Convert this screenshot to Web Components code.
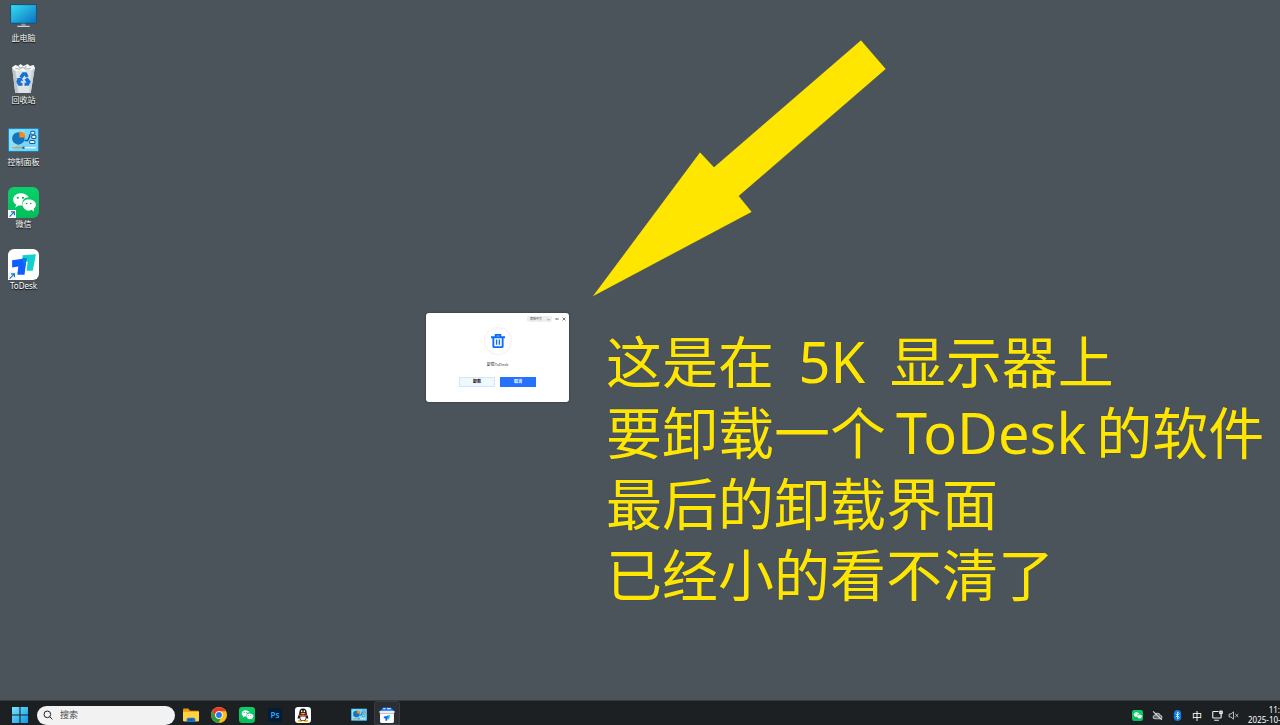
<!DOCTYPE html>
<html lang="zh-CN">
<head>
<meta charset="utf-8">
<title>桌面</title>
<style>
  html, body {
    margin: 0;
    height: 100%;
  }
  body {
    background: #4b545a;
    font-family: "Noto Sans", "Noto Sans CJK SC", sans-serif;
    overflow: hidden;
  }
  note-text span {
    margin: 0 10px;
  }
</style>
</head>
<body>
<desk-top>
  <desk-shortcut slot="icons" icon="pc">此电脑</desk-shortcut>
  <desk-shortcut slot="icons" icon="bin">回收站</desk-shortcut>
  <desk-shortcut slot="icons" icon="panel">控制面板</desk-shortcut>
  <desk-shortcut slot="icons" icon="wechat" linked>微信</desk-shortcut>
  <desk-shortcut slot="icons" icon="todesk" linked>ToDesk</desk-shortcut>
  <big-arrow></big-arrow>
  <uninstall-window>卸载ToDesk</uninstall-window>
  <note-text>
    <p>这是在 <span>5K</span> 显示器上</p>
    <p>要卸载一个<span>ToDesk</span>的软件</p>
    <p>最后的卸载界面</p>
    <p>已经小的看不清了</p>
  </note-text>
  <task-bar slot="bar"></task-bar>
</desk-top>

<script>
const ICONS = {
  pc: `<svg viewBox="0 0 30 30">
    <defs><linearGradient id="g" x1="0" y1="0" x2="1" y2="1"><stop offset="0" stop-color="#36dcee"/><stop offset="1" stop-color="#0b73c4"/></linearGradient></defs>
    <rect x="2" y="3" width="26" height="19" rx="1" fill="#17547c"/><rect x="3" y="4" width="24" height="17" fill="url(#g)"/>
    <path d="M13 22h4v2h-4z" fill="#8d979c"/><path d="M9 24h12v1H9z" fill="#e6eaec"/></svg>`,
  bin: `<svg viewBox="0 0 30 30">
    <path d="M4 4l3 25h15l4-25z" fill="#dfe3e5"/><path d="M4 4l3 2 3 23H7z" fill="#bfc6ca"/><path d="M26 4l-3 2-3 23h2z" fill="#cbd1d4"/>
    <path d="M4 4l3-2 3 1 2-2 3 2 4-2 2 2 4-1 1 3-3 2-4-1-3 2-4-1-4 1-3-2z" fill="#f7f8f8"/>
    <path d="M7 5l4 1 3-2 3 2 5-1M10 3l2 2M18 3l-2 2" fill="none" stroke="#aeb6ba"/>
    <g fill="#1672d2"><path d="M11 13l3-4h4l2 4-3 1-1-2-2 3z"/><path d="M19 14l3 4-2 4h-4v-3h2l-2-3z"/><path d="M8 15l5-1 2 4-2-1-1 2h2v3h-4l-2-4 1-2z"/></g></svg>`,
  panel: `<svg viewBox="0 0 30 30">
    <rect y="3" width="30" height="23" rx="1" fill="#168bc8"/><rect x="1" y="4" width="28" height="21" fill="#8ee0fa"/>
    <path d="M17 4h12v21H5z" fill="#6dcef4" opacity=".6"/>
    <circle cx="10" cy="13" r="6" fill="#1274bf"/><path d="M11 12V6a6 6 0 0 1 6 6z" fill="#f58a1b"/>
    <path d="M16 15h3l2-4V9" fill="none" stroke="#135b9d" stroke-width="1.500"/>
    <g fill="#e9faff" stroke="#135b9d"><rect x="22" y="6" width="4" height="3" rx="1"/><rect x="23" y="10" width="4" height="3" rx="1"/><rect x="21" y="15" width="5" height="3" rx="1"/></g>
    <path d="M4 22h11" stroke="#f08b1d"/><path d="M15 22h12" stroke="#fff"/><path d="M15 21v2" stroke="#135b9d" stroke-width="2"/></svg>`,
  wechat: `<svg viewBox="0 0 30 30">
    <defs><linearGradient id="g" x2="0" y2="1"><stop stop-color="#08d16b"/><stop offset="1" stop-color="#05bd59"/></linearGradient></defs>
    <rect width="30" height="30" rx="6" fill="url(#g)"/>
    <path d="M12 6c-4 0-7 3-7 6 0 2 1 4 3 5l-1 3 3-2 4 0c-1-5 2-8 6-8-1-2-4-4-8-4z" fill="#fff"/>
    <path d="M20 12c-4 0-6 2-6 5s3 6 6 6l3-1 2 2v-3c1-1 2-2 2-4 0-3-3-5-7-5z" fill="#fff"/>
    <g fill="#08a94f"><circle cx="9.500" cy="10.500" r="1"/><circle cx="14.500" cy="10.500" r="1"/><circle cx="18" cy="16" r=".8"/><circle cx="22" cy="16" r=".8"/></g></svg>`,
  todesk: `<svg viewBox="0 0 30 30">
    <rect width="30" height="30" rx="6" fill="#fff"/>
    <path d="M14 6l13-1-3 16h-6l1-9h-5z" fill="#12cfd0"/><path d="M4 11l14-2-2 16H9l1-8-6 1z" fill="#0f5dff"/><path d="M14 9l4 0-1 8-3-5z" fill="#0879e6"/></svg>`,
  start: `<svg viewBox="0 0 30 30">
    <defs><linearGradient id="g" gradientUnits="userSpaceOnUse" x1="0" y1="0" x2="30" y2="30"><stop stop-color="#7ce5fa"/><stop offset="1" stop-color="#0b97e8"/></linearGradient></defs>
    <path d="M0 0h14v14H0zM16 0h14v14H16zM0 16h14v14H0zM16 16h14v14H16z" fill="url(#g)"/></svg>`,
  folder: `<svg viewBox="0 0 30 30">
    <path d="M0 5q0-2 2-2h8l3 4h15q2 0 2 2v17H0z" fill="#e79a0c"/><path d="M0 9h30v16q0 2-2 2H2q-2 0-2-2z" fill="#ffd143"/>
    <path d="M7 28v-5q0-3 3-3h10q3 0 3 3v5z" fill="#1678cf"/><path d="M11 24h8" stroke="#0b4f98" stroke-width="2"/></svg>`,
  chrome: `<svg viewBox="0 0 30 30">
    <circle cx="15" cy="15" r="15" fill="#fbc116"/><path d="M2 8a15 15 0 0 1 26 0H15a7 7 0 0 0-6 11z" fill="#e33b2e"/>
    <path d="M2 8l7 11a7 7 0 0 0 9 3l-4 8A15 15 0 0 1 2 8z" fill="#259a4b"/><circle cx="15" cy="15" r="7" fill="#fff"/><circle cx="15" cy="15" r="5.500" fill="#2878e8"/></svg>`,
  qq: `<svg viewBox="0 0 30 30">
    <rect width="30" height="30" rx="6" fill="#fff"/><ellipse cx="10" cy="26" rx="5" ry="2" fill="#f7ad18"/><ellipse cx="20" cy="26" rx="5" ry="2" fill="#f7ad18"/>
    <path d="M15 3c-5 0-7 4-7 8 0 4-3 7-3 10 0 2 2 0 3-1 1 4 3 6 7 6s6-2 7-6c1 1 3 3 3 1 0-3-3-6-3-10 0-4-2-8-7-8z" fill="#161719"/>
    <ellipse cx="15" cy="20" rx="5" ry="5" fill="#fff"/><ellipse cx="12.500" cy="8" rx="1.500" ry="2" fill="#fff"/><ellipse cx="17.500" cy="8" rx="1.500" ry="2" fill="#fff"/>
    <path d="M10 12q5-2 10 0-5 4-10 0z" fill="#f7ad18"/><path d="M8 15q7 4 14 0" fill="none" stroke="#e93a34" stroke-width="3"/></svg>`,
  uninstall: `<svg viewBox="0 0 30 30">
    <path d="M4 5l3-4h16l3 4v6H4z" fill="#1c71e8"/><path d="M8 3h4M15 3h7" stroke="#cfe4ff" stroke-width="2"/><rect x="1" y="7" width="28" height="5" rx="1" fill="#e4efff"/>
    <path d="M2 12h26v15q0 3-3 3H5q-3 0-3-3z" fill="#fff"/><path d="M15 16l6-1-2 8h-3z" fill="#17c7d5"/><path d="M9 18l8-1-2 9-3 0 0-5-3 0z" fill="#1462ff"/></svg>`,
  cloud: `<svg viewBox="0 0 30 30" fill="none" stroke="#b5b8ba" stroke-width="3">
    <path d="M9 24h14q5-1 4-6-1-3-5-3-1-6-7-6-6 0-7 6-5 0-5 5 1 4 6 4z" fill="#64686b"/><path d="M3 4l24 23" stroke="#e0e2e3"/></svg>`,
  bluetooth: `<svg viewBox="0 0 30 30"><rect x="5" width="20" height="30" rx="10" fill="#0a7be2"/>
    <path d="M10 10l10 10-5 5V5l5 5-10 10" fill="none" stroke="#fff" stroke-width="2"/></svg>`,
  network: `<svg viewBox="0 0 30 30" fill="none" stroke="#eceeef" stroke-width="3">
    <path d="M18 4H4q-2 0-2 2v14q0 2 2 2h19q2 0 2-2v-6M6 28h13"/><rect x="21" y="3" width="7" height="7" rx="2" fill="#aeb1b3"/><path d="M25 10v6"/></svg>`,
  mute: `<svg viewBox="0 0 30 30" fill="none" stroke="#eceeef" stroke-width="2">
    <path d="M3 11h5l7-6v20l-7-6H3zM20 11l8 8M28 11l-8 8"/></svg>`,
  trash: `<svg viewBox="0 0 30 30" fill="none" stroke="#0b6cff" stroke-width="4">
    <path d="M0 7h30M10 6V2h10v4M5 8v18q0 2 2 2h16q2 0 2-2V8"/><path d="M12 12v11M18 12v11" stroke-width="3"/></svg>`,
  search: `<svg viewBox="0 0 30 30" fill="none" stroke="#202224" stroke-width="3">
    <circle cx="13" cy="13" r="10"/><path d="M20 20l8 8"/></svg>`,
  chevron: `<svg viewBox="0 0 30 30" fill="none" stroke="#444" stroke-width="5"><path d="M4 10l11 11 11-11"/></svg>`,
  min: `<svg viewBox="0 0 30 30" stroke="#333" stroke-width="6"><path d="M2 15h26"/></svg>`,
  close: `<svg viewBox="0 0 30 30" stroke="#333" stroke-width="5"><path d="M4 4l22 22M26 4L4 26"/></svg>`,
  jump: `<svg viewBox="0 0 30 30"><rect width="30" height="30" fill="#f5f8fa"/>
    <path d="M6 25L22 9M11 7h13v13" fill="none" stroke="#0b6fc8" stroke-width="4"/></svg>`
};

class BaseElement extends HTMLElement {
  constructor() {
    super();
    this.attachShadow({ mode: 'open' });
  }

  connectedCallback() {
    this.shadowRoot.innerHTML = `<style>${this.styles()}</style>${this.render()}`;
  }
}

class SvgIcon extends BaseElement {
  styles = () => `
    :host { display: block; flex: none; width: var(--size, 31px); height: var(--size, 31px); }
    svg { display: block; width: 100%; height: 100%; }
  `;

  render = () => ICONS[this.getAttribute('name')];
}

class DeskTop extends BaseElement {
  styles = () => `
    :host { display: flex; flex-direction: column; height: 100%; }
    main { flex: 1; position: relative; min-height: 0; }
    nav {
      display: flex;
      flex-direction: column;
      align-items: flex-start;
      gap: 19px;
      padding: 1px 0 0 1px;
    }
  `;

  render = () => `
    <main>
      <nav aria-label="桌面图标"><slot name="icons"></slot></nav>
      <slot></slot>
    </main>
    <slot name="bar"></slot>
  `;
}

class DeskShortcut extends BaseElement {
  styles = () => `
    :host { display: block; }
    a {
      display: flex;
      flex-direction: column;
      align-items: center;
      width: 45px;
      color: #fff;
      font-size: 8px;
      line-height: 12px;
      text-decoration: none;
      text-shadow: 0 1px 1px #000;
      white-space: nowrap;
    }
    .picture { position: relative; }
    .jump { position: absolute; left: 0; bottom: 0; --size: 8px; }
  `;

  render = () => `
    <a href="#">
      <span class="picture">
        <svg-icon name="${this.getAttribute('icon')}"></svg-icon>
        ${this.hasAttribute('linked') ? '<svg-icon class="jump" name="jump"></svg-icon>' : ''}
      </span>
      <slot></slot>
    </a>
  `;
}

class BigArrow extends BaseElement {
  styles = () => `
    :host { position: absolute; left: 592px; top: 40px; }
    svg { display: block; width: 295px; height: 258px; }
  `;

  render = () => `
    <svg viewBox="0 0 295 258">
      <path d="M0 257L108 112l14 15L269 0l25 29-147 127 13 16z" fill="#ffe600" stroke="#35426a" stroke-width=".5"/>
    </svg>
  `;
}

class UninstallWindow extends BaseElement {
  styles = () => `
    :host {
      position: absolute;
      left: 426px;
      top: 313px;
      display: flex;
      flex-direction: column;
      align-items: center;
      width: 143px;
      height: 89px;
      border-radius: 3px;
      background: #fff;
      box-shadow: 0 0 2px #272d31;
      color: #333;
      font-size: 4px;
      line-height: 6px;
    }
    header {
      display: flex;
      align-self: stretch;
      justify-content: flex-end;
      align-items: center;
      gap: 3px;
      padding: 3px 3px 0 0;
    }
    button { border: 0; padding: 0; background: none; font: inherit; color: inherit; }
    header button { --size: 4px; }
    label {
      display: flex;
      align-items: center;
      gap: 3px;
      padding: 0 2px 0 3px;
      border-radius: 2px;
      background: #eee;
      --size: 3px;
    }
    select {
      appearance: none;
      border: 0;
      padding: 0;
      width: 14px;
      height: 6px;
      background: none;
      color: #333;
      font: 3px/6px "Noto Sans CJK SC", sans-serif;
    }
    .badge {
      display: grid;
      place-items: center;
      width: 26px;
      height: 26px;
      margin: 6px 0 8px;
      border-radius: 50%;
      box-shadow: 0 0 2px #d3d7db;
      --size: 14px;
    }
    footer { display: flex; gap: 5px; margin-top: 9px; }
    footer button {
      width: 36px;
      height: 10px;
      border: 1px solid #d0e7f9;
      background: #f0f8ff;
      color: #111;
      font-weight: 700;
    }
    footer .primary { border-color: #2672ff; background: #2672ff; color: #fff; }
  `;

  render = () => `
    <header>
      <label><select aria-label="语言"><option>简体中文</option></select><svg-icon name="chevron"></svg-icon></label>
      <button aria-label="最小化"><svg-icon name="min"></svg-icon></button>
      <button aria-label="关闭"><svg-icon name="close"></svg-icon></button>
    </header>
    <div class="badge"><svg-icon name="trash"></svg-icon></div>
    <div><slot></slot></div>
    <footer>
      <button>卸载</button>
      <button class="primary">取消</button>
    </footer>
  `;
}

class NoteText extends BaseElement {
  styles = () => `
    :host {
      position: absolute;
      left: 606px;
      top: 326px;
      color: #ffe600;
      font-size: 56px;
      line-height: 71px;
      white-space: nowrap;
      text-shadow: 0 0 1px #26356e;
    }
    ::slotted(p) { margin: 0; }
  `;

  render = () => `<slot></slot>`;
}

class TaskBar extends BaseElement {
  styles = () => `
    :host {
      display: flex;
      justify-content: space-between;
      height: 24px;
      border-top: 1px solid #353b40;
      background: #1c2023;
      color: #fff;
    }
    .apps, .tray { display: flex; align-items: center; padding-top: 4px; }
    .apps { padding-left: 6px; }
    button {
      display: grid;
      place-items: center;
      width: 28px;
      height: 20px;
      border: 0;
      padding: 0;
      background: none;
      color: inherit;
      font: inherit;
      --size: 16px;
    }
    .active {
      box-sizing: border-box;
      width: 26px;
      height: 24px;
      margin: -4px 1px 0;
      padding-top: 3px;
      border: 1px solid #383c40;
      border-radius: 3px 3px 0 0;
      background: #2b2f33;
    }
    .search {
      display: flex;
      align-items: center;
      gap: 7px;
      box-sizing: border-box;
      width: 138px;
      height: 19px;
      margin: 0 2px 0 3px;
      padding: 0 6px;
      border-radius: 10px;
      background: #f2f2f2;
      --size: 10px;
    }
    input {
      min-width: 0;
      flex: 1;
      border: 0;
      padding: 0;
      background: none;
      font: 9px/18px "Noto Sans CJK SC", sans-serif;
    }
    input::placeholder { color: #4a4a4a; opacity: 1; }
    .ps {
      width: 14px;
      height: 14px;
      border-radius: 2px;
      background: #001e36;
      color: #35a8ff;
      font-size: 8px;
      font-weight: 600;
      line-height: 13px;
    }
    .blank { width: 28px; }
    .tray button { width: 20px; --size: 11px; font-size: 10px; }
    .tray .mute { width: 12px; }
    .clock {
      width: 32px;
      margin-left: 9px;
      font-size: 8px;
      line-height: 10px;
      text-align: right;
      white-space: nowrap;
    }
    .clock time { display: block; }
  `;

  app = (icon, title, cls = '') => `<button class="${cls}" aria-label="${title}"><svg-icon name="${icon}"></svg-icon></button>`;

  render = () => `
    <div class="apps">
      ${this.app('start', '开始')}
      <label class="search"><svg-icon name="search"></svg-icon><input type="search" placeholder="搜索" aria-label="搜索"></label>
      ${this.app('folder', '文件资源管理器')}
      ${this.app('chrome', 'Chrome')}
      ${this.app('wechat', '微信')}
      <button><span class="ps">Ps</span></button>
      ${this.app('qq', 'QQ')}
      <span class="blank"></span>
      ${this.app('panel', '控制面板')}
      ${this.app('uninstall', 'ToDesk', 'active')}
    </div>
    <div class="tray">
      ${this.app('wechat', '微信')}
      ${this.app('cloud', '云同步')}
      ${this.app('bluetooth', '蓝牙')}
      <button>中</button>
      ${this.app('network', '网络')}
      ${this.app('mute', '静音', 'mute')}
      <div class="clock"><time>11:</time><time>2025-10-</time></div>
    </div>
  `;
}

customElements.define('svg-icon', SvgIcon);
customElements.define('desk-top', DeskTop);
customElements.define('desk-shortcut', DeskShortcut);
customElements.define('big-arrow', BigArrow);
customElements.define('uninstall-window', UninstallWindow);
customElements.define('note-text', NoteText);
customElements.define('task-bar', TaskBar);
</script>
</body>
</html>
